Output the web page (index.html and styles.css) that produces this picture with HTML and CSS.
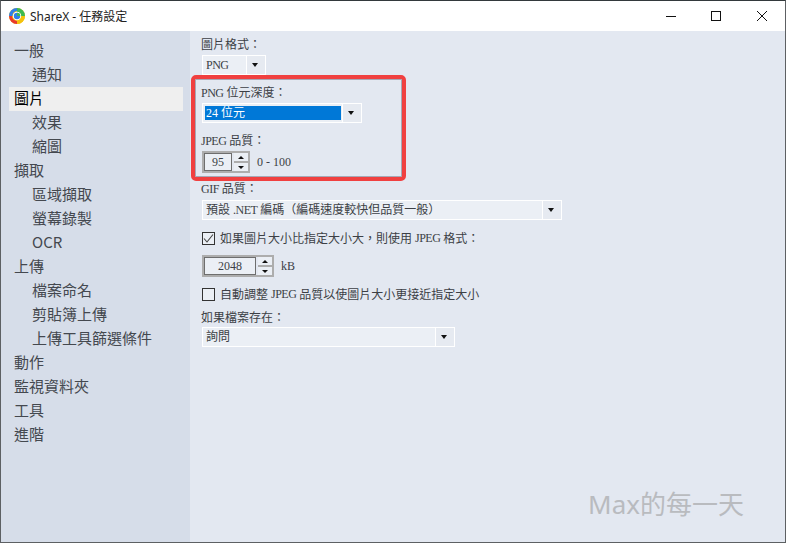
FILE: index.html
```html
<!DOCTYPE html>
<html lang="zh-Hant">
<head>
<meta charset="utf-8">
<title>ShareX - 任務設定</title>
<link rel="stylesheet" href="styles.css">
</head>
<body>
<div class="window">
  <header class="titlebar">
    <svg class="logo" width="16" height="16" viewBox="0 0 16 16">
      <circle cx="8" cy="8" r="8" fill="#f4c20d"/>
      <path d="M8 0A8 8 0 0 1 16 8H12A4 4 0 0 0 8 4Z" fill="#3cba54"/>
      <path d="M8 0A8 8 0 0 0 0 8H3.5A5 5 0 0 1 8 3Z" fill="#2f7fe8"/>
      <path d="M0 8A8 8 0 0 0 8 16V13A5 5 0 0 1 3 8Z" fill="#e8392e"/>
      <path d="M8 16A8 8 0 0 0 16 8H13A5 5 0 0 1 8 13Z" fill="#f4c20d"/>
      <circle cx="8" cy="8" r="4.2" fill="#fff"/>
      <circle cx="8" cy="8" r="3.2" fill="#2f7fe8"/>
      <path d="M8 4.8A3.2 3.2 0 0 1 11.2 8H8Z" fill="#3cba54"/>
    </svg>
    <span class="title">ShareX - 任務設定</span>
    <div class="winbtns">
      <svg class="winbtn" width="10" height="10" viewBox="0 0 10 10"><path d="M0 5.5H10" stroke="#111" fill="none"/></svg>
      <svg class="winbtn" width="10" height="10" viewBox="0 0 10 10"><rect x="0.5" y="0.5" width="9" height="9" stroke="#111" fill="none"/></svg>
      <svg class="winbtn" width="10" height="10" viewBox="0 0 10 10"><path d="M0 0L10 10M10 0L0 10" stroke="#111" fill="none"/></svg>
    </div>
  </header>
  <div class="body">
    <nav class="side">
      <div class="item">一般</div>
      <div class="item sub">通知</div>
      <div class="item active">圖片</div>
      <div class="item sub">效果</div>
      <div class="item sub">縮圖</div>
      <div class="item">擷取</div>
      <div class="item sub">區域擷取</div>
      <div class="item sub">螢幕錄製</div>
      <div class="item sub">OCR</div>
      <div class="item">上傳</div>
      <div class="item sub">檔案命名</div>
      <div class="item sub">剪貼簿上傳</div>
      <div class="item sub">上傳工具篩選條件</div>
      <div class="item">動作</div>
      <div class="item">監視資料夾</div>
      <div class="item">工具</div>
      <div class="item">進階</div>
    </nav>
    <main class="main">
      <div class="label first">圖片格式：</div>
      <div class="combo w-fmt"><span class="val"><span class="caps">PNG</span></span><span class="arrow"></span></div>
      <div class="label gap-a"><span class="caps">PNG</span> 位元深度：</div>
      <div class="combo w-depth"><span class="val selected">24 位元</span><span class="arrow"></span></div>
      <div class="label gap-b"><span class="caps">JPEG</span> 品質：</div>
      <div class="spinrow">
        <div class="spin w-q"><span class="field">95</span><span class="btns"><span class="up"></span><span class="down"></span></span></div>
        <span class="unit">0 - 100</span>
      </div>
      <div class="label gap-c"><span class="caps">GIF</span> 品質：</div>
      <div class="combo combo-low w-gif"><span class="val">預設 <span class="caps">.NET</span> 編碼（編碼速度較快但品質一般）</span><span class="arrow"></span></div>
      <div class="check row-a"><span class="box"><svg width="13" height="13" viewBox="0 0 13 13"><path d="M2 6.5L5 10L11 2.5" stroke="#444" stroke-width="1.1" fill="none"/></svg></span>如果圖片大小比指定大小大，則使用 <span class="caps">JPEG</span> 格式：</div>
      <div class="spinrow row-b">
        <div class="spin w-kb"><span class="field">2048</span><span class="btns"><span class="up"></span><span class="down"></span></span></div>
        <span class="unit">kB</span>
      </div>
      <div class="check row-c"><span class="box"></span>自動調整 <span class="caps">JPEG</span> 品質以使圖片大小更接近指定大小</div>
      <div class="label gap-d">如果檔案存在：</div>
      <div class="combo combo-high w-exist"><span class="val">詢問</span><span class="arrow"></span></div>
      <div class="highlight"></div>
      <div class="mark">Max的每一天</div>
    </main>
  </div>
</div>
</body>
</html>
```
FILE: styles.css
```css
* { box-sizing: border-box; }
html, body { margin: 0; padding: 0; }
body {
  width: 786px; height: 543px; overflow: hidden;
  font-family: "Liberation Serif", "Noto Sans CJK TC", serif;
  font-size: 12px; color: #3c3f45;
}
.caps { letter-spacing: -0.5px; }
.window {
  width: 786px; height: 543px;
  display: flex; flex-direction: column;
  border: 1px solid #5d6063;
  border-top-color: #33393c;
  background: #e3e8f1;
}
.titlebar {
  height: 30px; background: #fff; flex: none;
  display: flex; align-items: center; padding: 0 0 1px 8px;
}
.logo { flex: none; }
.title {
  margin-left: 5px; font: 12px "Noto Sans", "Noto Sans CJK TC", sans-serif; color: #222;
}
.winbtns { margin-left: auto; display: flex; align-items: center; gap: 35px; padding-right: 18px; }
.winbtn { flex: none; }
.winbtn:last-child { margin-left: 1px; }
.body { flex: 1; display: flex; min-height: 0; }
.side {
  width: 189px; flex: none; background: #d6dde9;
  padding: 8px 7px 0 8px;
  font: 15px/22px "Noto Sans CJK TC", "Noto Sans", sans-serif; color: #44484f;
}
.item { height: 24px; padding-left: 5px; white-space: nowrap; }
.item.sub { padding-left: 23px; }
.item.active { background: #efefef; color: #000; }
.main { position: relative; flex: 1; padding-left: 11px; }
.label { height: 16px; line-height: 16px; white-space: nowrap; }
.first { margin-top: 6px; }
.gap-a { margin-top: 10px; }
.gap-b { margin-top: 10px; }
.gap-c { margin-top: 8px; }
.gap-d { margin-top: 8px; }
.combo {
  margin: 2px 0 0 1px; height: 20px; display: flex;
  border: 1px solid #fff; background: #ebeff5;
}
.combo-low { margin-top: 3px; }
.combo-high { margin-top: 1px; }
.w-fmt { width: 64px; }
.w-depth { width: 160px; }
.w-gif { width: 360px; }
.w-exist { width: 253px; }
.val { flex: 1; line-height: 18px; padding-left: 3px; white-space: nowrap; min-width: 0; }
.val.selected { background: #0078d7; color: #fff; margin: 2px 0 2px 2px; line-height: 14px; padding-left: 1px; }
.arrow {
  width: 19px; flex: none; margin-left: 1px; border-left: 1px solid #fff; position: relative;
  background: #e6eaf1;
}
.arrow::after {
  content: ""; position: absolute; left: 5px; top: 7px;
  border: 3.5px solid transparent; border-top: 4px solid #111; border-bottom: 0;
}
.spinrow { display: flex; align-items: center; margin: 2px 0 0 1px; height: 22px; }
.spin {
  height: 22px; border: 2px solid #adadad; display: flex; background: #e3e8f1;
}
.w-q { width: 48px; }
.w-kb { width: 72px; }
.field {
  flex: 1; border: 1px solid #6e6e6e; background: #ebeff5;
  text-align: center; line-height: 16px; min-width: 0;
}
.btns { width: 14px; margin-left: 2px; display: flex; flex-direction: column; gap: 2px; background: #adadad; flex: none; }
.up, .down { flex: 1; background: #ebeff5; position: relative; }
.up::after, .down::after {
  content: ""; position: absolute; left: 4px; top: 3px;
  border: 3px solid transparent;
}
.up::after { border-bottom: 3px solid #111; border-top: 0; }
.down::after { border-top: 3px solid #111; border-bottom: 0; }
.unit { margin-left: 7px; }
.check { display: flex; align-items: center; margin-left: 1px; height: 16px; white-space: pre; }
.box {
  width: 13px; height: 13px; border: 1px solid #333; margin-right: 5px; flex: none; background: #ebeff5;
  display: flex;
}
.box svg { margin: -1px; flex: none; }
.row-a { margin-top: 10px; }
.row-b { margin-top: 9px; }
.row-c { margin-top: 9px; }
.highlight {
  position: absolute; left: 1px; top: 44px; width: 215px; height: 106px;
  border: 4px solid #f04040; border-radius: 5px;
  box-shadow: inset 0 0 0 1px rgba(90, 90, 110, .45);
}
.mark {
  position: absolute; right: 41px; top: 453px;
  font: 26px "Noto Sans", "Noto Sans CJK TC", sans-serif; color: #b9bbbf;
}
```
